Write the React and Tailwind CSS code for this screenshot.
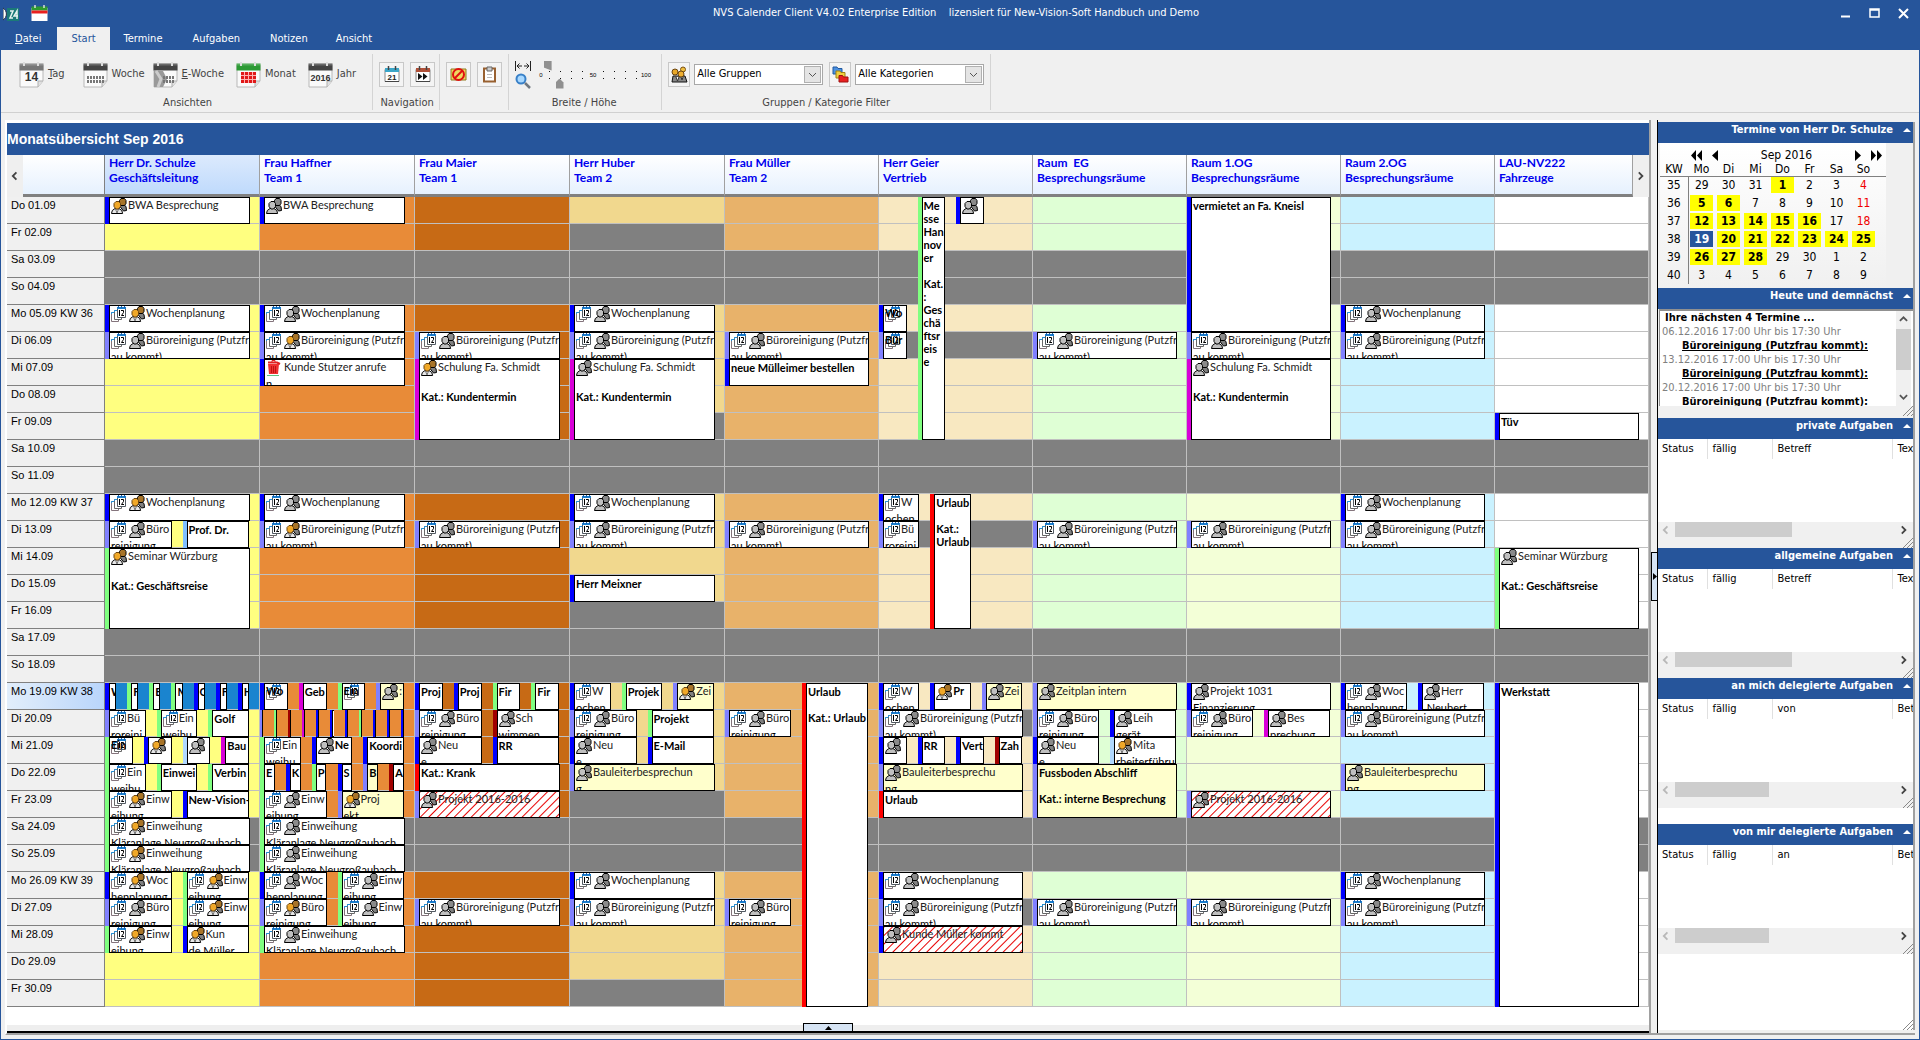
import React from "react";

const UI = "font-['DejaVu_Sans_Condensed','Liberation_Sans',sans-serif]";

const COLUMNS = [
  { name: "Herr Dr. Schulze", group: "Geschäftsleitung", bg: "bg-[#ffff80]" },
  { name: "Frau Haffner", group: "Team 1", bg: "bg-[#e88b38]" },
  { name: "Frau Maier", group: "Team 1", bg: "bg-[#c76a15]" },
  { name: "Herr Huber", group: "Team 2", bg: "bg-[#f1d88e]", off: [2, 9, 16, 23, 30] },
  { name: "Frau Müller", group: "Team 2", bg: "bg-[#e8b26a]" },
  { name: "Herr Geier", group: "Vertrieb", bg: "bg-[#f8e8c1]", off: [6, 13, 20, 27] },
  { name: "Raum  EG", group: "Besprechungsräume", bg: "bg-[#dfffd5]" },
  { name: "Raum 1.OG", group: "Besprechungsräume", bg: "bg-[#f3ffd7]" },
  { name: "Raum 2.OG", group: "Besprechungsräume", bg: "bg-[#caf2ff]" },
  { name: "LAU-NV222", group: "Fahrzeuge", bg: "bg-white" },
];

const WEEKDAYS = ["Mo", "Di", "Mi", "Do", "Fr", "Sa", "So"];
const KW = { 5: 36, 12: 37, 19: 38, 26: 39 };
const DAYS = Array.from({ length: 30 }, (_, i) => {
  const d = i + 1;
  const wd = WEEKDAYS[(d + 2) % 7];
  return {
    d,
    weekend: wd === "Sa" || wd === "So",
    label: `${wd} ${String(d).padStart(2, "0")}.09${KW[d] ? ` KW ${KW[d]}` : ""}`,
  };
});

const BAR = {
  B: "bg-[#0000ff]",
  L: "bg-[#8080ff]",
  G: "bg-[#80ff80]",
  M: "bg-[#d800d8]",
  R: "bg-[#ff0000]",
  D: "bg-[#a00000]",
  S: "bg-[#80c0ff]",
  P: "bg-[#b0d8ff]",
};

/* ev(days, bar, icons, lines, lane, lanes, look)
   icons: c = series, p = persons, g = persons (organiser), t = task */
const ev = (days, bar, icons, lines, lane = 0, lanes = 1, look = "") => ({
  from: Array.isArray(days) ? days[0] : days,
  to: Array.isArray(days) ? days[1] : days,
  bar,
  icons,
  lines: Array.isArray(lines) ? lines : [lines],
  lane,
  lanes,
  look,
});
const woche = (d, icons = "cp") => ev(d, "B", icons, "Wochenplanung");
const buero = (d, icons = "cp") => ev(d, "L", icons, ["Büroreinigung (Putzfr", "au kommt)"]);
const bueroHalf = (d, icons = "cp") => ev(d, "L", icons, ["Büro", "reinigung"], 0, 2);
const einw = (d, icons, lane) => ev(d, "G", icons, ["Einw", "eihung"], lane, 2);
const einwFull = (d, icons) => ev(d, "G", icons, ["Einweihung", "Kläranlage Neugroßaubach"]);
const schulung = (icons) => ev([7, 9], "M", icons, ["Schulung Fa. Schmidt", "", "Kat.: Kundentermin"]);

const EVENTS = [
  [
    ev(1, "B", "g", "BWA Besprechung"),
    woche(5, "cg"), buero(6), woche(12, "cg"), bueroHalf(13),
    ev(13, "S", "", "Prof. Dr.", 1, 2),
    ev([14, 16], "G", "g", ["Seminar Würzburg", "", "Kat.: Geschäftsreise"]),
    ev(19, "B", "", "W", 0, 7), ev(19, "G", "", "F", 1, 7), ev(19, "G", "", "E", 2, 7),
    ev(19, "G", "", "M", 3, 7), ev(19, "B", "", "G", 4, 7), ev(19, "B", "", "F", 5, 7),
    ev(19, "B", "", "H", 6, 7),
    ev(20, "L", "c", ["Bü", "roreini"], 0, 3), ev(20, "G", "c", ["Ein", "weihu"], 1, 3),
    ev(20, "G", "", "Golf", 2, 3),
    ev(21, "G", "c", "Ein", 0, 4, "over"), ev(21, "B", "g", "", 1, 4),
    ev(21, "P", "p", "", 2, 4), ev(21, "M", "", "Bau", 3, 4),
    ev(22, "G", "c", ["Ein", "weihu"], 0, 3), ev(22, "G", "", "Einwei", 1, 3),
    ev(22, "G", "", "Verbin", 2, 3),
    einw(23, "cg", 0), ev(23, "B", "", "New-Vision-", 1, 2),
    einwFull(24, "cg"), einwFull(25, "cg"),
    ev(26, "B", "cg", ["Woc", "henplanung"], 0, 2), einw(26, "cg", 1),
    bueroHalf(27), einw(27, "cg", 1),
    einw(28, "cg", 0), ev(28, "B", "g", ["Kun", "de Müller"], 1, 2),
  ],
  [
    ev(1, "B", "p", "BWA Besprechung"),
    woche(5), buero(6, "cg"), ev(7, "B", "t", ["Kunde Stutzer anrufe", "n"]),
    woche(12), buero(13, "cg"),
    ev(19, "B", "c", "Wo", 0, 4, "over"), ev(19, "M", "", "Geb", 1, 4),
    ev(19, "G", "c", "Ein", 2, 4, "over"), ev(19, "L", "p", ":", 3, 4, "yellow"),
    ..."LGDMBBBGBBB".split("").map((b, i) => ev(20, b, "", "", i, 11)),
    ev(21, "G", "c", ["Ein", "weihu"], 0, 3), ev(21, "B", "p", "Ne", 1, 3, "bold"),
    ev(21, "B", "", "Koordi", 2, 3),
    ev(22, "G", "", "E", 0, 6), ev(22, "B", "", "K", 1, 6), ev(22, "G", "", "P", 2, 6),
    ev(22, "B", "", "S", 3, 6), ev(22, "L", "", "B", 4, 6, "yellow"), ev(22, "D", "", "A", 5, 6),
    einw(23, "cp", 0), ev(23, "L", "g", ["Proj", "ekt"], 1, 2, "yellow"),
    einwFull(24, "cp"), einwFull(25, "cp"),
    ev(26, "B", "cp", ["Woc", "henplanung"], 0, 2), einw(26, "cp", 1),
    bueroHalf(27, "cg"), einw(27, "cp", 1), einwFull(28, "cp"),
  ],
  [
    buero(6), schulung("g"), buero(13),
    ev(19, "B", "", "Proj", 0, 4), ev(19, "B", "", "Proj", 1, 4),
    ev(19, "G", "", "Fir", 2, 4), ev(19, "G", "", "Fir", 3, 4),
    bueroHalf(20), ev(20, "D", "p", ["Sch", "wimmen"], 1, 2),
    ev(21, "B", "p", ["Neu", "e"], 0, 2), ev(21, "B", "", "RR", 1, 2),
    ev(22, "R", "", "Kat.: Krank"), ev(23, "L", "p", "Projekt 2016-2016", 0, 1, "hatch"),
    buero(27),
  ],
  [
    woche(5), buero(6), schulung("p"), woche(12), buero(13), ev(15, "B", "", "Herr Meixner"),
    ev(19, "B", "c", ["W", "ochen"], 0, 3), ev(19, "G", "", "Projek", 1, 3),
    ev(19, "L", "g", "Zei", 2, 3, "yellow"),
    bueroHalf(20), ev(20, "G", "", "Projekt", 1, 2),
    ev(21, "B", "p", ["Neu", "e"], 0, 2), ev(21, "B", "", "E-Mail", 1, 2),
    ev(22, "L", "p", ["Bauleiterbesprechun", "g"], 0, 1, "yellow"),
    woche(26), buero(27),
  ],
  [
    buero(6), ev(7, "B", "", "neue Mülleimer bestellen"), buero(13),
    ev([19, 30], "R", "", ["Urlaub", "", "Kat.: Urlaub"], 1, 2),
    bueroHalf(20), bueroHalf(27),
  ],
  [
    ev([1, 9], "G", "", ["Me", "sse", "Han", "nov", "er", "", "Kat.", ":", "Ges", "chä", "ftsr", "eis", "e"], 1, 4),
    ev(1, "B", "p", "", 2, 4),
    ev(5, "B", "c", "Wo", 0, 4, "over"), ev(6, "L", "c", "Bür", 0, 4, "over"),
    ev(12, "B", "c", ["W", "ochen"], 0, 3), ev(13, "L", "c", ["Bü", "roreini"], 0, 3),
    ev([12, 16], "R", "", ["Urlaub", "", "Kat.:", "Urlaub"], 1, 3),
    ev(19, "B", "c", ["W", "ochen"], 0, 3), ev(19, "B", "g", "Pr", 1, 3, "bold"),
    ev(19, "L", "p", "Zei", 2, 3, "yellow"),
    buero(20),
    ev(21, "B", "p", "", 0, 4), ev(21, "B", "", "RR", 1, 4), ev(21, "B", "", "Vert", 2, 4),
    ev(21, "D", "", "Zah", 3, 4),
    ev(22, "L", "p", ["Bauleiterbesprechu", "ng"], 0, 1, "yellow"),
    ev(23, "R", "", "Urlaub"), woche(26), buero(27),
    ev(28, "B", "p", "Kunde Müller kommt", 0, 1, "hatch"),
  ],
  [
    buero(6), buero(13), ev(19, "L", "p", "Zeitplan intern", 0, 1, "yellow"),
    bueroHalf(20), ev(20, "B", "p", ["Leih", "gerät"], 1, 2),
    ev(21, "B", "p", ["Neu", "e"], 0, 2), ev(21, "P", "g", ["Mita", "rbeiterführu"], 1, 2),
    ev([22, 23], "L", "", ["Fussboden Abschliff", "", "Kat.: interne Besprechung"], 0, 1, "yellow"),
    buero(27),
  ],
  [
    ev([1, 5], "B", "", "vermietet an Fa. Kneisl"), buero(6), schulung("p"), buero(13),
    ev(19, "B", "p", ["Projekt 1031", "Finanzierung"]),
    bueroHalf(20), ev(20, "M", "p", ["Bes", "prechung"], 1, 2),
    ev(23, "L", "p", "Projekt 2016-2016", 0, 1, "hatch"), buero(27),
  ],
  [
    woche(5), buero(6), woche(12), buero(13),
    ev(19, "B", "cp", ["Woc", "henplanung"], 0, 2), ev(19, "B", "p", ["Herr", " Neubert"], 1, 2),
    buero(20), ev(22, "L", "p", ["Bauleiterbesprechu", "ng"], 0, 1, "yellow"),
    woche(26), buero(27),
  ],
  [
    ev(9, "B", "", "Tüv"),
    ev([14, 16], "G", "p", ["Seminar Würzburg", "", "Kat.: Geschäftsreise"]),
    ev([19, 30], "B", "", "Werkstatt"),
  ],
];

/* ---------- icons ---------- */

function SeriesIcon() {
  return (
    <svg width="16" height="16" viewBox="0 0 16 16" className="shrink-0" aria-hidden="true">
      <path d="M.5 6.500h7v9h-7z" fill="#fff" stroke="#84747c" />
      <path d="M3.500 4.500h7v9h-7z" fill="#fff" stroke="#686868" />
      <path d="M.5 8V6.500H3M3.500 6V4.500H6" stroke="#2090d8" fill="none" />
      <path d="M6.500 2.500h8v9h-8z" fill="#fff" stroke="#505860" />
      <path d="M6 1h9v2H6z" fill="#1a80d0" />
      <path d="M7.500 0v2M10.500 0v2M13.500 0v2" stroke="#1a60b0" />
      <path d="M8.500 4v6M10 4.500h2.500v2L10.500 9.500H13" stroke="#000" fill="none" />
    </svg>
  );
}

function PeopleIcon({ gold }) {
  return (
    <svg width="16" height="16" viewBox="0 0 16 16" className="mr-px shrink-0" aria-hidden="true">
      <path d="M9 8.500L12 6l3 2.500.5 4-3 .5z" fill="#808080" stroke="#000" />
      <path d="M8.500 2.500l1.500-2h3.500l1.500 2v3L13.500 7.500H10L8.500 5.500z" fill={gold ? "#a87428" : "#8a8a8a"} stroke="#000" />
      <path d="M.5 15.500l.8-3L4 10.500h4l2.800 2 .8 3z" fill={gold ? "#e8e8e8" : "#c0c0c0"} stroke="#000" />
      {gold && <path d="M4.500 11l1.500 4 1.500-4z" fill="#fff" stroke="#707070" />}
      <path d="M3 5.500L5 3.500h3l1.500 2v3L7.500 11H5L3 8.500z" fill={gold ? "#f0a828" : "#c0c0c0"} stroke={gold ? "#6a4410" : "#000"} />
    </svg>
  );
}

function TaskIcon() {
  return (
    <svg width="18" height="16" viewBox="0 0 18 16" className="shrink-0" aria-hidden="true">
      <path d="M2 4h11l-1 10H3z" fill="#f03030" />
      <path d="M2 2.500h9l3 1.500" stroke="#e02020" strokeWidth="2" fill="none" />
      <path d="M6 2V.5h3V2" stroke="#e02020" fill="none" />
      <path d="M5.500 6v7M7.500 6v7M9.500 6v7" stroke="#c01010" />
      <path d="M1 15.500h12" stroke="#60c080" />
    </svg>
  );
}

function CalendarIcon({ head = "#444", text, children }) {
  return (
    <svg width="25" height="26" viewBox="0 0 25 26" aria-hidden="true">
      <path d="M1 3h23v16l-5 6H1z" fill="#fafafa" stroke="#b8b8b8" />
      <path d="M19 25v-6h5" fill="#e0e0e0" stroke="#b0b0b0" />
      <path d="M.5 1.500h24v7H.5z" fill={head} />
      <path d="M.5 1.500h24v2H.5z" fill="#fff" opacity=".2" />
      <path d="M5 0v4M19 0v4" stroke="#ddd" strokeWidth="2" />
      {text && (
        <text x="12.500" y="19" textAnchor="middle" fontFamily="Liberation Sans, sans-serif" fontWeight="bold" fontSize={text.length > 2 ? 9 : 12} fill="#333">
          {text}
        </text>
      )}
      {children}
    </svg>
  );
}

const WeekDots = ({ x = 4, w = 17 }) => (
  <path d={`M${x} 15.500h${w}M${x} 19.500h${w}`} stroke="#777" strokeDasharray="2 1" strokeWidth="3" />
);

function Chevron({ dir, className }) {
  const d = { left: "M6 1L2 5l4 4", right: "M2 1l4 4-4 4", up: "M1 6l4-4 4 4", down: "M1 3l4 4 4-4" }[dir];
  return (
    <svg width="9" height="10" viewBox="0 0 10 10" className={className} aria-hidden="true">
      <path d={d} fill="none" stroke="currentColor" strokeWidth="2" />
    </svg>
  );
}

/* ---------- ribbon ---------- */

function TitleBar() {
  return (
    <header className="flex h-[27px] items-center text-[11px] text-white">
      <div className="flex flex-1 items-center gap-3 pl-0.5">
        <svg width="16" height="16" viewBox="0 0 16 16" aria-hidden="true">
          <path d="M4 2h12v13H4z" fill="#1b7a78" />
          <path d="M0 2a7 7 0 010 12z" fill="#fff" stroke="#234" />
          <path d="M7 5h3l-3 7h3M14 13V5l-3 5h4" stroke="#e8f4f0" strokeWidth="1.500" fill="none" />
        </svg>
        <svg width="17" height="17" viewBox="0 0 17 17" aria-hidden="true">
          <path d="M.5 3h16v13H.5z" fill="#fff" />
          <path d="M.5 1.500h16v4H.5z" fill="#2f9a2f" />
          <path d="M4 0v3M13 0v3" stroke="#ddd" strokeWidth="1.500" />
          <path d="M.5 5.500h16v3H.5z" fill="#e82020" />
        </svg>
      </div>
      <h1 className="whitespace-pre">
        NVS Calender Client V4.02 Enterprise Edition    lizensiert für New-Vision-Soft Handbuch und Demo
      </h1>
      <div className="flex flex-1 items-center justify-end gap-[18px] pr-2.5">
        <button aria-label="Minimieren">
          <svg width="11" height="11" viewBox="0 0 11 11"><path d="M1 8.500h9" stroke="#fff" strokeWidth="2" /></svg>
        </button>
        <button aria-label="Maximieren">
          <svg width="11" height="11" viewBox="0 0 11 11"><path d="M1 1h9v8H1zM1 2h9" stroke="#fff" strokeWidth="1.500" fill="none" /></svg>
        </button>
        <button aria-label="Schließen">
          <svg width="11" height="11" viewBox="0 0 11 11"><path d="M1 1l9 9M10 1l-9 9" stroke="#fff" strokeWidth="2" /></svg>
        </button>
      </div>
    </header>
  );
}

function Tabs() {
  const base = "h-[23px] px-3.5 pt-0.5";
  return (
    <nav className="flex text-[11px] text-white" role="tablist">
      <button role="tab" className={`${base} mr-0.5`}><span className="underline">D</span>atei</button>
      <button role="tab" aria-selected="true" className={`${base} bg-[#f0f0f0] text-[#26559b]`}>Start</button>
      <button role="tab" className={`${base} mr-0.5`}>Termine</button>
      <button role="tab" className={`${base} mr-0.5`}>Aufgaben</button>
      <button role="tab" className={base}>Notizen</button>
      <button role="tab" className={base}>Ansicht</button>
    </nav>
  );
}

function Group({ label, className = "", children }) {
  return (
    <section className={`flex flex-col border-r border-[#d4d4d4] ${className}`}>
      <div className="flex flex-1 items-center">{children}</div>
      <p className="h-[15px] text-center leading-[15px]">{label}</p>
    </section>
  );
}

const ViewButton = ({ icon, children }) => (
  <button className="flex items-center gap-1">{icon}<span>{children}</span></button>
);

const SmallButton = ({ label, className = "w-[25px]", children }) => (
  <button aria-label={label} className={`flex h-[25px] items-center justify-center border border-[#c8c8c8] bg-[#f4f4f4] ${className}`}>
    {children}
  </button>
);

function DayIcon({ text, head, children }) {
  return (
    <svg width="16" height="17" viewBox="0 0 16 17" aria-hidden="true">
      <path d="M1 3.500h14v12H1z" fill="#fff" stroke="#888" />
      <path d="M1 2h14v4H1z" fill={head} />
      <path d="M4.500 0v4M11.500 0v4" stroke="#444" strokeWidth="1.500" />
      <path d="M1 15.500h14" stroke="#444" />
      {text && <text x="8" y="13.500" textAnchor="middle" fontFamily="Liberation Sans, sans-serif" fontSize="8" fontWeight="bold" fill="#222">{text}</text>}
      {children}
    </svg>
  );
}

function SizeSliders() {
  const thumb =
    "appearance-none bg-transparent [&::-webkit-slider-thumb]:appearance-none [&::-webkit-slider-thumb]:w-2 [&::-webkit-slider-thumb]:bg-[#909090]";
  return (
    <div className="flex flex-col">
      <input
        type="range" aria-label="Breite" defaultValue="6"
        className={`${thumb} h-2.5 w-[116px] [&::-webkit-slider-thumb]:h-2.5 [&::-webkit-slider-thumb]:[clip-path:polygon(0_0,100%_0,100%_100%,0_70%)]`}
      />
      <svg width="116" height="8" viewBox="0 0 116 8" aria-hidden="true">
        {[12, 23, 34, 45, 66, 77, 88, 99].map((x) => (
          <path key={x} d={`M${x} .5h1M${x} 7.500h1`} stroke="#111" />
        ))}
        {[["0", 4], ["50", 56], ["100", 109]].map(([t, x]) => (
          <text key={t} x={x} y="6" textAnchor="middle" fontSize="6" fontFamily="Liberation Sans, sans-serif">{t}</text>
        ))}
      </svg>
      <input
        type="range" aria-label="Höhe" defaultValue="17"
        className={`${thumb} h-2.5 w-[116px] [&::-webkit-slider-thumb]:h-2.5 [&::-webkit-slider-thumb]:[clip-path:polygon(50%_0,100%_40%,100%_100%,0_100%,0_40%)]`}
      />
    </div>
  );
}

function Combo({ label, options }) {
  return (
    <div className="flex h-[21px] w-[129px] items-center border border-[#a8a8a8] bg-white">
      <select aria-label={label} className="min-w-0 flex-1 appearance-none pl-0.5 text-black">
        {options.map((o) => <option key={o}>{o}</option>)}
      </select>
      <span className="mr-px flex h-[17px] w-[17px] items-center justify-center border border-[#b0b0b0] bg-[#e4e4e4] text-[#555]">
        <svg width="9" height="6" viewBox="0 0 9 6" aria-hidden="true"><path d="M1 1l3.500 3.500L8 1" fill="none" stroke="currentColor" /></svg>
      </span>
    </div>
  );
}

function Ribbon() {
  return (
    <div className="flex h-[63px] border-b border-[#d0d0d0] bg-[#f0f0f0] pt-1 pb-0.5 text-[11px] text-[#444]">
      <Group label="Ansichten" className="pr-4 pl-[18px]">
        <div className="flex gap-2">
          <div className="mr-2.5"><ViewButton icon={<CalendarIcon head="#777" text="14" />}><u>T</u>ag</ViewButton></div>
          <ViewButton icon={<CalendarIcon><WeekDots /></CalendarIcon>}>Woche</ViewButton>
          <ViewButton icon={<CalendarIcon><path d="M1 9h9l4 8-4 8H1z" fill="#999" /><path d="M3 9l5 8-3 8" stroke="#ccc" strokeWidth="3" fill="none" /><WeekDots x={10} w={11} /></CalendarIcon>}><u>E</u>-Woche</ViewButton>
          <div className="ml-1"><ViewButton icon={<CalendarIcon head="#2c9a34"><path d="M5 10h15v11H5z" fill="#e01818" /><path d="M8.500 10v11M12.500 10v11M16.500 10v11M5 13.500h15M5 17.500h15" stroke="#ffb0b0" /></CalendarIcon>}>Monat</ViewButton></div>
          <div className="ml-1"><ViewButton icon={<CalendarIcon text="2016" />}>Jahr</ViewButton></div>
        </div>
      </Group>
      <Group label="Navigation" className="pr-1 pl-1.5">
        <div className="flex gap-1.5">
          <SmallButton label="Heute"><DayIcon head="#3ba6c8" text="21" /></SmallButton>
          <SmallButton label="Gehe zu"><DayIcon head="#b05038"><path d="M3 7l4.500 3.500L3 14zM8 7l4.500 3.500L8 14z" fill="#111" /></DayIcon></SmallButton>
        </div>
      </Group>
      <Group label="" className="px-1.5">
        <div className="flex gap-1.5">
          <SmallButton label="Sperren">
            <svg width="17" height="17" viewBox="0 0 17 17" aria-hidden="true">
              <path d="M1 3h15v11H1z" fill="#f0d860" stroke="#907820" />
              <circle cx="8.500" cy="8.500" r="5.500" fill="none" stroke="#e01010" strokeWidth="2" />
              <path d="M12.500 4.500l-8 8" stroke="#e01010" strokeWidth="2" />
            </svg>
          </SmallButton>
          <SmallButton label="Einfügen">
            <svg width="15" height="17" viewBox="0 0 15 17" aria-hidden="true">
              <path d="M2 2.500h11v13H2z" fill="#fff" stroke="#986030" strokeWidth="2" />
              <path d="M5 1h5v4H5z" fill="#ccc" stroke="#666" />
              <path d="M5 8.500h5M5 11.500h5" stroke="#bbb" />
            </svg>
          </SmallButton>
        </div>
      </Group>
      <Group label="Breite / Höhe" className="pr-2 pl-1.5">
        <div className="flex gap-1.5">
          <div className="flex flex-col gap-0.5">
            <svg width="16" height="10" viewBox="0 0 16 10" aria-hidden="true">
              <path d="M.5 0v10M15.500 0v10M2 5h5M9 5h5M4.500 2.500L2 5l2.500 2.500M11.500 2.500L14 5l-2.500 2.500" stroke="#222" fill="none" />
            </svg>
            <svg width="16" height="16" viewBox="0 0 16 16" aria-hidden="true">
              <circle cx="6" cy="6" r="4.500" fill="#a8d8ff" stroke="#3880c8" strokeWidth="2" />
              <path d="M10 10l5 5" stroke="#707880" strokeWidth="2.500" />
            </svg>
          </div>
          <SizeSliders />
        </div>
      </Group>
      <Group label="Gruppen / Kategorie Filter" className="px-1.5">
        <div className="flex items-center gap-1">
          <SmallButton label="Gruppen" className="w-[22px]">
            <svg width="17" height="17" viewBox="0 0 17 17" aria-hidden="true">
              <path d="M1 16l1-6h12l2 6z" fill="#888" stroke="#111" />
              <path d="M5 11l1.500 4L8 11M10 11l1 3 1-3" fill="#fff" stroke="#333" />
              <circle cx="12" cy="3.500" r="2.500" fill="#f0c040" stroke="#7a5010" />
              <circle cx="4" cy="6" r="3" fill="#e8a828" stroke="#6a4410" />
              <circle cx="10" cy="8" r="3" fill="#f0b030" stroke="#6a4410" />
            </svg>
          </SmallButton>
          <Combo label="Gruppe" options={["Alle Gruppen"]} />
          <SmallButton label="Kategorien" className="ml-0.5 w-[22px]">
            <svg width="17" height="17" viewBox="0 0 17 17" aria-hidden="true">
              <path d="M1 1h4l1 1.500h4V8H1z" fill="#4a90e0" stroke="#2058a0" />
              <path d="M4 5h4l1 1.500h4V12H4z" fill="#f0d040" stroke="#a08010" />
              <path d="M7 9.500h3.500l1 1.500H16v5H7z" fill="#e82020" stroke="#a01010" />
            </svg>
          </SmallButton>
          <Combo label="Kategorie" options={["Alle Kategorien"]} />
        </div>
      </Group>
    </div>
  );
}

/* ---------- month grid ---------- */

const TINT = {
  yellow: "bg-[#ffffcc]",
  hatch: "bg-[repeating-linear-gradient(135deg,#e80000_0px,#ffffff_1px,#ffffff_5px,#e80000_6px)]",
};

function Appointment({ e }) {
  const over = e.look === "over";
  const bold = e.icons === "" || over || e.look === "bold";
  const tint = TINT[e.look] || "bg-white";
  return (
    <div
      className="z-10 col-start-1 flex min-w-0 overflow-hidden"
      style={{
        gridRow: `${e.from} / ${e.to + 1}`,
        marginLeft: `${(e.lane / e.lanes) * 100}%`,
        width: `calc(${100 / e.lanes}% - ${e.lanes > 1 ? 11 : 10}px)`,
      }}
    >
      <span className={`shrink-0 ${e.lanes > 7 ? "w-0.5" : "w-1"} ${BAR[e.bar]}`} />
      <div className={`min-w-0 flex-1 overflow-hidden border border-black pl-px whitespace-pre text-black ${tint}`}>
        <div className={`relative flex ${e.icons ? "h-[17px]" : "mt-px h-[13px]"}`}>
          <span className={over ? "absolute top-0 left-0" : "contents"}>
            {e.icons.includes("c") && <SeriesIcon />}
            {e.icons === "cp" || e.icons === "cg" ? <span className="w-0.5 shrink-0" /> : null}
            {e.icons.includes("p") && <PeopleIcon />}
            {e.icons.includes("g") && <PeopleIcon gold />}
            {e.icons.includes("t") && <TaskIcon />}
          </span>
          <span className={`relative ${bold ? "font-bold" : "text-[#222]"}`}>{e.lines[0]}</span>
        </div>
        {e.lines.slice(1).map((l, i) => (
          <div key={i} className={`h-[13px] ${bold || l.startsWith("Kat") ? "font-bold" : ""}`}>{l}</div>
        ))}
      </div>
    </div>
  );
}

const COLS = "grid min-w-0 flex-1 grid-cols-[repeat(4,155fr)_repeat(6,154fr)]";

function MonthView() {
  return (
    <section className="flex flex-1 flex-col border-t-[3px] border-white bg-white">
      <h2 className="h-8 bg-[#26559b] font-['Liberation_Sans',sans-serif] text-[14px] leading-8 font-bold text-white">
        Monatsübersicht Sep 2016
      </h2>
      <div className="flex h-[42px] font-['Lato',sans-serif] text-[12px] leading-[15px] font-bold text-[#0000ee]">
        <button aria-label="Zurück" className="flex w-4 items-center justify-center bg-[#efefef] text-[#444]"><Chevron dir="left" /></button>
        <div className="w-[82px] border-r border-b-[3px] border-[#808080] bg-linear-to-b from-white to-[#e6f1fe]" />
        <div className={COLS}>
          {COLUMNS.map((c, i) => (
            <div key={c.name} className="flex min-w-0">
              <div
                className={`min-w-0 flex-1 border-r border-b-[3px] border-r-[#a0a0a0] border-b-[#808080] bg-linear-to-b pl-1 whitespace-pre ${i === 0 ? "from-[#dceafd] to-[#bfdafc]" : "from-white to-[#e6f1fe]"}`}
              >
                {c.name}
                <br />
                {c.group}
              </div>
              {i === 9 && (
                <button aria-label="Weiter" className="flex w-4 items-center justify-center bg-[#efefef] text-[#444]"><Chevron dir="right" /></button>
              )}
            </div>
          ))}
        </div>
      </div>
      <div className="flex">
        <div className="w-[98px] border-r border-[#808080] font-['Liberation_Sans',sans-serif] text-[11px] text-black">
          {DAYS.map((r) => (
            <div
              key={r.d}
              className={`h-[27px] border-b border-[#808080] pt-px pl-1 leading-[15px] ${r.d === 19 ? "bg-linear-to-r from-[#e2eefb] to-[#b9d5fb]" : "bg-[#f0f0f0]"}`}
            >
              {r.label}
            </div>
          ))}
        </div>
        <div className={`${COLS} font-['Lato',sans-serif] text-[11px] leading-[13px]`}>
          {COLUMNS.map((c, ci) => (
            <div key={c.name} className="grid min-w-0 auto-rows-[27px] grid-cols-1">
              {DAYS.map((r) => {
                const off = r.weekend || (c.off && c.off.includes(r.d));
                const bg = off ? "bg-[#808080]" : ci === 0 && r.d === 19 ? "bg-[#1a84cf]" : c.bg;
                return (
                  <div
                    key={r.d}
                    className={`col-start-1 border-r border-b border-[#c0c0c0] ${bg}`}
                    style={{ gridRow: r.d }}
                  />
                );
              })}
              {EVENTS[ci].map((e, i) => <Appointment key={i} e={e} />)}
            </div>
          ))}
        </div>
      </div>
      <div className="flex-1" />
      <div className="flex h-2 items-end justify-center border-b-2 border-black bg-[#eeeeee]">
        <button aria-label="Ausklappen" className="flex h-2 w-[50px] items-center justify-center border border-b-0 border-black bg-[#d6e4f4]">
          <svg width="7" height="4" viewBox="0 0 7 4" aria-hidden="true"><path d="M0 4l3.500-4L7 4z" fill="#000" /></svg>
        </button>
      </div>
    </section>
  );
}

/* ---------- side panel ---------- */

function Grip() {
  return (
    <svg width="11" height="10" viewBox="0 0 11 10" className="ml-auto block" aria-hidden="true">
      <path d="M1 10L11 0M5 10l6-6M9 10l2-2" stroke="#888" />
    </svg>
  );
}

function PanelHeader({ children }) {
  return (
    <h3 className="h-[21px] bg-[#26559b] text-white">
      <button className="flex w-full items-start justify-end gap-2.5 pr-0.5 text-[11px] leading-[15px] font-bold">
        <span>{children}</span>
        <svg width="8" height="4" viewBox="0 0 8 4" className="mt-1.5" aria-hidden="true"><path d="M0 4l4-4 4 4z" fill="#fff" /></svg>
      </button>
    </h3>
  );
}

const WEEKS = [
  [35, [29, 30, 31, 1, 2, 3, 4]],
  [36, [5, 6, 7, 8, 9, 10, 11]],
  [37, [12, 13, 14, 15, 16, 17, 18]],
  [38, [19, 20, 21, 22, 23, 24, 25]],
  [39, [26, 27, 28, 29, 30, 1, 2]],
  [40, [3, 4, 5, 6, 7, 8, 9]],
];
const BUSY = ["35-1", "36-5", "36-6", "37-12", "37-13", "37-14", "37-15", "37-16", "38-20", "38-21", "38-22", "38-23", "38-24", "38-25", "39-26", "39-27", "39-28"];
const RED = ["35-4", "36-11", "37-18"];

function dayLook(key) {
  if (key === "38-19") return "bg-[#26559b] text-white font-bold";
  if (BUSY.includes(key)) return "bg-[#ffff00] font-bold";
  if (RED.includes(key)) return "text-[#f00000]";
  return "";
}

const Tri = ({ d, w = 6 }) => (
  <svg width={w} height="11" viewBox={`0 0 ${w} 11`} aria-hidden="true"><path d={d} fill="#000" /></svg>
);

function MiniCalendar() {
  return (
    <div className="flex h-[145px] flex-col bg-[#f0f0f0] pl-0.5 text-[12px] text-black">
      <div className="w-[226px] flex-1 bg-linear-to-b from-white to-[#f0f0f0] pt-1">
        <div className="flex h-4 items-center pr-1 pl-[31px]">
          <button aria-label="Jahr zurück"><Tri w={11} d="M0 5.500L5 0v11zM6 5.500L11 0v11z" /></button>
          <button aria-label="Monat zurück" className="ml-2.5"><Tri d="M0 5.500L6 0v11z" /></button>
          <span className="flex-1 text-center">Sep 2016</span>
          <button aria-label="Monat vor"><Tri d="M6 5.500L0 0v11z" /></button>
          <button aria-label="Jahr vor" className="ml-2.5"><Tri w={11} d="M0 0l5 5.500L0 11zM6 0l5 5.500L6 11z" /></button>
        </div>
        <table className="w-[226px] table-fixed border-collapse text-center">
          <thead>
            <tr className="h-[13px] border-b border-[#808080] leading-[12px]">
              <th className="w-7 font-normal">KW</th>
              {WEEKDAYS.map((w) => <th key={w} className="w-[27px] font-normal">{w}</th>)}
              <th />
            </tr>
          </thead>
          <tbody>
            {WEEKS.map(([kw, days]) => (
              <tr key={kw} className="h-[18px]">
                <td className="border-r border-[#808080] p-0 leading-[16px]">{kw}</td>
                {days.map((d, i) => (
                  <td key={i} className="p-0">
                    <button className={`mx-auto block h-4 w-[23px] leading-[16px] ${dayLook(`${kw}-${d}`)}`}>{d}</button>
                  </td>
                ))}
                <td />
              </tr>
            ))}
          </tbody>
        </table>
      </div>
    </div>
  );
}

function Upcoming() {
  const dates = ["06.12.2016", "13.12.2016", "20.12.2016"];
  return (
    <div className="h-[109px] bg-[#f0f0f0] pl-px">
      <div className="flex h-[97px] border-t-2 border-l border-[#909090] bg-white">
        <div className="min-w-0 flex-1 overflow-hidden text-[11px] leading-[14px] whitespace-nowrap">
          <p className="pl-[5px] font-bold text-black">Ihre nächsten 4 Termine ...</p>
          {dates.map((d) => (
            <React.Fragment key={d}>
              <p className="pl-0.5 text-[#808080]">{d} 17:00 Uhr bis 17:30 Uhr</p>
              <a href="#termin" className="block pl-[22px] font-bold text-black underline">Büroreinigung (Putzfrau kommt):</a>
            </React.Fragment>
          ))}
        </div>
        <div className="mr-0.5 flex w-[15px] flex-col items-center bg-[#f0f0f0] py-1 text-[#555]">
          <Chevron dir="up" />
          <span className="mt-1 h-[41px] w-full bg-[#cdcdcd]" />
          <Chevron dir="down" className="mt-auto" />
        </div>
      </div>
      <Grip />
    </div>
  );
}

function TaskPanel({ title, cols, thumb }) {
  return (
    <section>
      <PanelHeader>{title}</PanelHeader>
      <div className="overflow-hidden bg-white">
        <table className="w-[300px] table-fixed border-collapse text-left text-[11px] text-black">
          <thead>
            <tr className="h-5">
              <th className="w-[49px] border-r border-[#e0e0e0] pl-1 font-normal">Status</th>
              <th className="w-[65px] border-r border-[#e0e0e0] pl-[5px] font-normal">fällig</th>
              <th className="w-[120px] border-r border-[#e0e0e0] pl-[5px] font-normal">{cols[0]}</th>
              <th className="pl-[5px] font-normal">{cols[1]}</th>
            </tr>
          </thead>
          <tbody><tr className="h-[63px]"><td colSpan="4" /></tr></tbody>
        </table>
      </div>
      <div className="bg-[#f0f0f0]">
        <div className="flex h-[15px] items-center pr-1 pl-1">
          <Chevron dir="left" className="text-[#b8b8b8]" />
          <span className={`ml-1 h-full bg-[#cdcdcd] ${thumb}`} />
          <Chevron dir="right" className="ml-auto text-[#444]" />
        </div>
        <div className="flex h-[11px] items-end"><Grip /></div>
      </div>
    </section>
  );
}

function SidePanel() {
  return (
    <aside className="mt-0.5 mb-[3px] flex w-[257px] flex-col overflow-hidden border-r-2 border-[#a0a0a0] bg-white">
      <PanelHeader>Termine von Herr Dr. Schulze</PanelHeader>
      <MiniCalendar />
      <PanelHeader>Heute und demnächst</PanelHeader>
      <Upcoming />
      <TaskPanel title="private Aufgaben" cols={["Betreff", "Text"]} thumb="w-[117px]" />
      <TaskPanel title="allgemeine Aufgaben" cols={["Betreff", "Text"]} thumb="w-[117px]" />
      <TaskPanel title="an mich delegierte Aufgaben" cols={["von", "Betreff"]} thumb="w-[94px]" />
      <div className="h-4" />
      <TaskPanel title="von mir delegierte Aufgaben" cols={["an", "Betreff"]} thumb="w-[94px]" />
      <div className="mt-auto"><Grip /></div>
    </aside>
  );
}

export default function App() {
  return (
    <div className={`flex min-h-screen flex-col border-x border-b border-[#26559b] bg-[#26559b] ${UI}`}>
      <TitleBar />
      <Tabs />
      <Ribbon />
      <main className="flex flex-1 bg-[#f0f0f0] pt-[7px] pr-1 pb-1 pl-1">
        <div className="flex min-w-0 flex-1 border-b-2 border-l-2 border-b-[#a0a0a0] border-l-white">
          <MonthView />
          <div className="flex w-[9px] items-center border-l-2 border-r border-l-[#a0a0a0] border-r-black bg-[#f0f0f0]">
            <button aria-label="Seitenleiste einklappen" className="flex h-[49px] w-full items-center justify-center border border-r-0 border-black bg-[#d6e4f4]">
              <svg width="4" height="7" viewBox="0 0 4 7" aria-hidden="true"><path d="M0 0l4 3.500L0 7z" fill="#000" /></svg>
            </button>
          </div>
          <SidePanel />
        </div>
      </main>
    </div>
  );
}
